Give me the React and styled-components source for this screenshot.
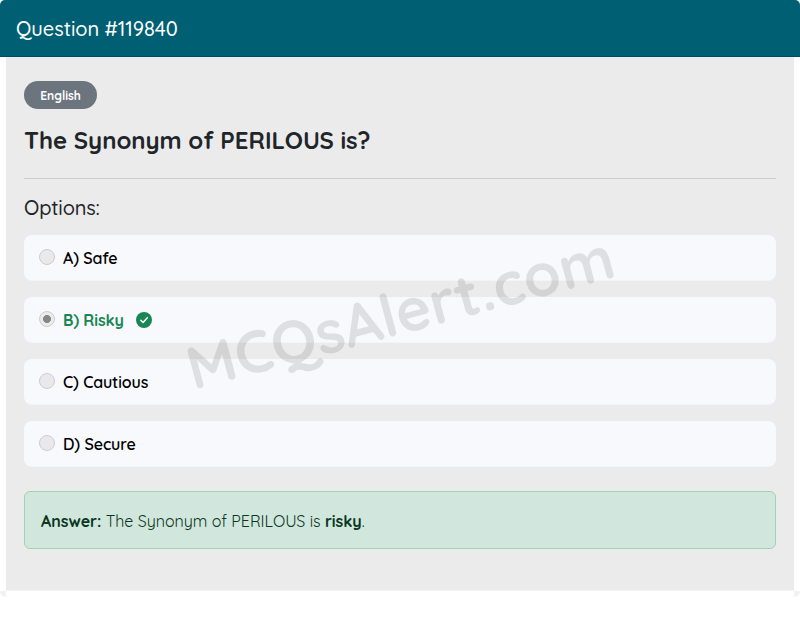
import styled, { createGlobalStyle } from "styled-components";

const GlobalStyle = createGlobalStyle`
  *,
  *::before,
  *::after {
    box-sizing: border-box;
  }

  body {
    margin: 0;
    background: #fff;
    color: #212529;
    font-family: Quicksand, Lato, sans-serif;
    font-size: 16px;
    line-height: 1.5;
  }
`;

const Card = styled.main`
  width: 100%;
`;

const CardHeader = styled.header`
  height: 57px;
  padding: 14px 16px 0;
  background: #005f73;
  border-bottom: 1px solid #004d60;
  border-radius: 5px 5px 0 0;

  h1 {
    margin: 0;
    color: #fff;
    font-size: 20px;
    font-weight: 500;
    line-height: 30px;
    letter-spacing: -0.04px;
  }
`;

const CardBody = styled.section`
  position: relative;
  height: 534px;
  margin: 0 6px;
  padding: 24px 18px 0;
  background: #ebebeb;
  border-bottom: 1px solid #f3f3f3;
`;

const Badge = styled.span`
  display: flex;
  align-items: center;
  justify-content: center;
  width: 73px;
  height: 28px;
  padding-top: 1px;
  border-radius: 14px;
  background: #6c757d;
  color: #fff;
  font-size: 12px;
  font-weight: 700;
`;

const Title = styled.h2`
  margin: 17px 0 0;
  font-size: 24px;
  font-weight: 700;
  line-height: 29px;
  letter-spacing: -0.04px;
`;

const Divider = styled.hr`
  height: 1px;
  margin: 23px 0 15px;
  border: 0;
  background: #cacbcb;
`;

const OptionsHeading = styled.h3`
  margin: 0;
  padding-top: 2px;
  font-size: 20px;
  font-weight: 500;
  line-height: 24px;
  letter-spacing: -0.15px;
`;

const OptionList = styled.div`
  display: flex;
  flex-direction: column;
  gap: 16px;
  margin-top: 15px;
`;

const Option = styled.label`
  display: flex;
  align-items: center;
  height: 46px;
  padding: 0 15px;
  border-bottom: 1px solid #f3f4f6;
  border-radius: 8px;
  background: #f8f9fd;
  color: ${({ $correct }) => ($correct ? "#198754" : "#000")};
  font-weight: ${({ $correct }) => ($correct ? 700 : 600)};
`;

const Radio = styled.input`
  appearance: none;
  width: 16px;
  height: 16px;
  margin: -1px 8px 0 0;
  border: 1px solid #cdcdcf;
  border-radius: 50%;
  background: ${({ checked }) =>
    checked
      ? "radial-gradient(circle, #878787 3.7px, #ebebeb 4.3px)"
      : "#e9e9eb"};
`;

const OptionText = styled.span`
  letter-spacing: -0.1px;
`;

const CheckIcon = styled.svg`
  width: 16px;
  height: 16px;
  margin-left: 12px;
`;

const Answer = styled.div`
  height: 58px;
  margin-top: 24px;
  padding: 17px 16px 0;
  border: 1px solid #a3cfbb;
  border-radius: 6px;
  background: #d1e7dd;
  color: #0a3622;
  font-weight: 400;
  letter-spacing: -0.03px;

  strong {
    font-weight: 700;
  }
`;

const Watermark = styled.div`
  position: absolute;
  top: 255px;
  left: 394px;
  transform: translate(-50%, -50%) rotate(-15deg);
  color: rgba(0, 0, 0, 0.1);
  font-size: 60px;
  font-weight: 700;
  line-height: 1.5;
  white-space: nowrap;
  pointer-events: none;
`;

const CardFooter = styled.footer`
  display: flex;
  justify-content: space-between;
`;

const Corner = styled.span`
  width: 6px;
  height: 6px;
  background: #f1f1f1;
  border-radius: ${({ $right }) => ($right ? "0 0 6px 0" : "0 0 0 6px")};
`;

const options = [
  { text: "A) Safe" },
  { text: "B) Risky", correct: true },
  { text: "C) Cautious" },
  { text: "D) Secure" },
];

const App = () => {
  return (
    <>
      <GlobalStyle />
      <Card>
        <CardHeader>
          <h1>Question #119840</h1>
        </CardHeader>
        <CardBody>
          <Badge>English</Badge>
          <Title>The Synonym of PERILOUS is?</Title>
          <Divider />
          <OptionsHeading>Options:</OptionsHeading>
          <OptionList>
            {options.map(({ text, correct }) => (
              <Option key={text} $correct={correct}>
                <Radio type="radio" checked={!!correct} disabled readOnly />
                <OptionText>{text}</OptionText>
                {correct && (
                  <CheckIcon viewBox="0 0 16 16">
                    <circle cx="8" cy="8" r="8" fill="#198754" />
                    <path
                      d="M4.8 8.2 7.1 10.5 11.3 5.8"
                      fill="none"
                      stroke="#fff"
                      strokeWidth="1.5"
                      strokeLinecap="round"
                      strokeLinejoin="round"
                    />
                  </CheckIcon>
                )}
              </Option>
            ))}
          </OptionList>
          <Answer>
            <strong>Answer:</strong> The Synonym of PERILOUS is{" "}
            <strong>risky</strong>.
          </Answer>
          <Watermark>MCQsAlert.com</Watermark>
        </CardBody>
        <CardFooter>
          <Corner />
          <Corner $right />
        </CardFooter>
      </Card>
    </>
  );
};

export default App;
